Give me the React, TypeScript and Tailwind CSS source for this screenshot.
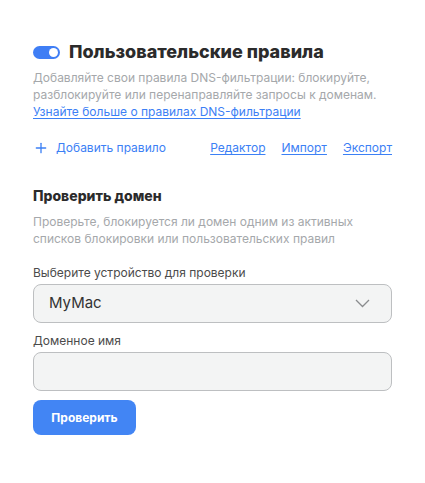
import { Plus } from 'lucide-react';

function Toggle() {
    return (
        <div className="flex h-[13px] w-[27px] shrink-0 items-center justify-end rounded-full bg-[#3f7ef5] px-[2px]">
            <div className="h-[9px] w-[9px] rounded-full bg-white" />
        </div>
    );
}

export default function App() {
    return (
        <div className="min-h-[483px] w-[425px] bg-white px-[33px] pt-[39px] font-['Inter',sans-serif]">
            <div className="flex h-[26px] items-center gap-[9px]">
                <Toggle />
                <h1 className="text-[18px] font-extrabold leading-[26px] text-[#2b2b2b]">
                    Пользовательские правила
                </h1>
            </div>
            <p className="mt-[4px] text-[12px] leading-[17px] text-[#a5a8ab]">
                Добавляйте свои правила DNS-фильтрации: блокируйте, разблокируйте или
                перенаправляйте запросы к доменам.
            </p>
            <a className="block text-[12px] leading-[17px] text-[#3c80f5] underline underline-offset-2">
                Узнайте больше о правилах DNS-фильтрации
            </a>

            <div className="mt-[19px] flex items-center text-[12px] leading-[18px] text-[#3c80f5]">
                <Plus className="h-[16px] w-[16px]" strokeWidth={2} />
                <span className="ml-[7px]">Добавить правило</span>
                <div className="ml-auto flex gap-[16px] underline underline-offset-2">
                    <span>Редактор</span>
                    <span>Импорт</span>
                    <span>Экспорт</span>
                </div>
            </div>

            <h2 className="mt-[29px] text-[14px] font-extrabold leading-[20px] text-[#2b2b2b]">
                Проверить домен
            </h2>
            <p className="mt-[7px] text-[12px] leading-[17px] text-[#a5a8ab]">
                Проверьте, блокируется ли домен одним из активных списков блокировки или
                пользовательских правил
            </p>

            <label className="mt-[17px] block text-[12px] leading-[17px] text-[#4b4b4b]">
                Выберите устройство для проверки
            </label>
            <div className="mt-[3px] flex h-[39px] items-center justify-between rounded-[8px] border border-[#bdbfc1] bg-[#f3f4f4] pl-[15px] pr-[21px]">
                <span className="text-[15px] text-[#333]">MyMac</span>
                <svg width="15" height="9" viewBox="0 0 15 9" fill="none">
                    <polyline points="1,1 7.5,7.5 14,1" stroke="#8a8c8e" strokeWidth="1.3" />
                </svg>
            </div>

            <label className="mt-[9px] block text-[12px] leading-[17px] text-[#4b4b4b]">
                Доменное имя
            </label>
            <div className="mt-[3px] h-[39px] rounded-[8px] border border-[#bdbfc1] bg-[#f3f4f4]" />

            <button className="mt-[9px] flex h-[35px] w-[103px] items-center justify-center rounded-[8px] bg-[#4285f4] text-[12px] font-bold text-white">
                Проверить
            </button>
        </div>
    );
}
